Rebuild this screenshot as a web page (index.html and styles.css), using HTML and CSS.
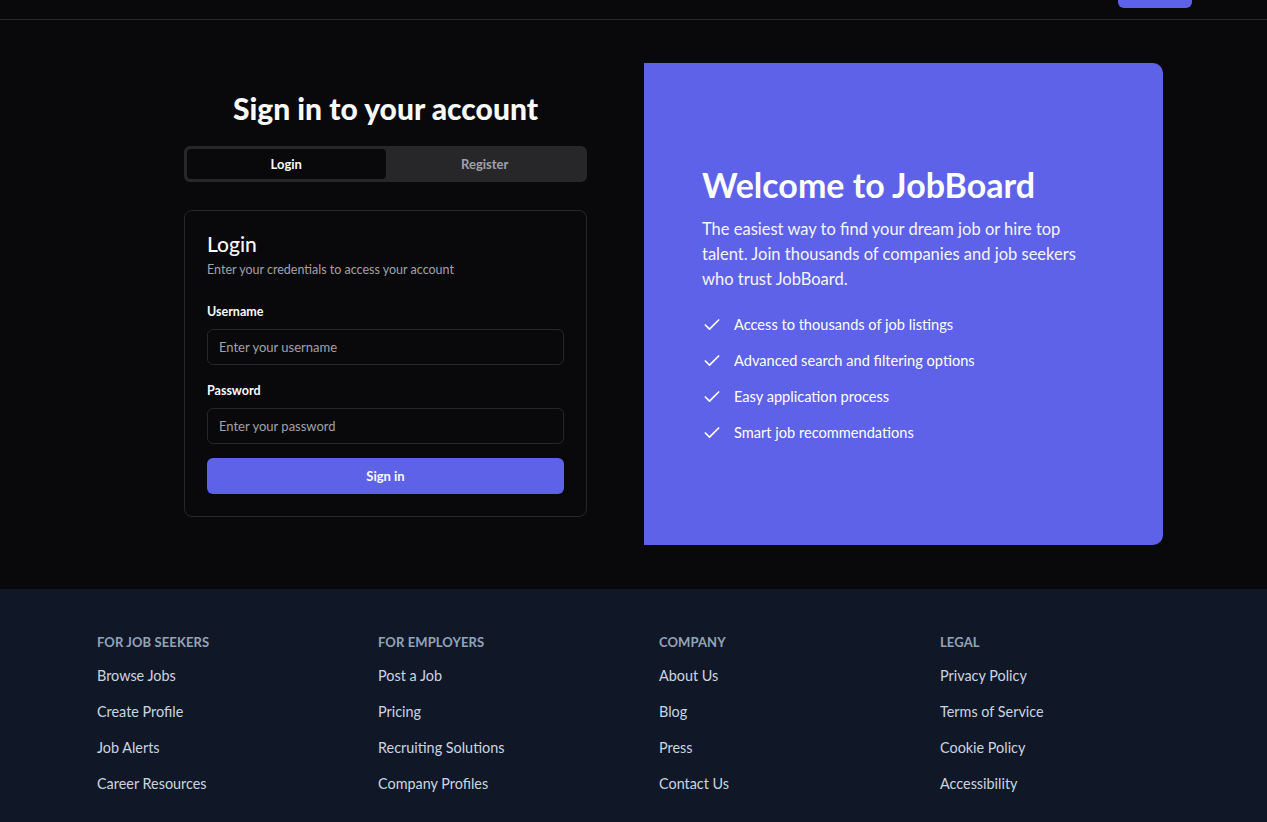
FILE: index.html
```html
<!DOCTYPE html>
<html lang="en">
<head>
<meta charset="utf-8">
<title>JobBoard - Sign in</title>
<link rel="stylesheet" href="styles.css">
</head>
<body>
<header class="topbar">
  <div class="topbar-btn"></div>
</header>
<main class="main">
  <section class="auth">
    <h1 class="auth-title">Sign in to your account</h1>
    <div class="tabs">
      <div class="tab tab-active">Login</div>
      <div class="tab">Register</div>
    </div>
    <div class="card">
      <h2 class="card-title">Login</h2>
      <p class="card-sub">Enter your credentials to access your account</p>
      <div class="field">
        <label class="label">Username</label>
        <div class="input">Enter your username</div>
      </div>
      <div class="field">
        <label class="label">Password</label>
        <div class="input">Enter your password</div>
      </div>
      <div class="btn">Sign in</div>
    </div>
  </section>
  <section class="promo">
    <div class="promo-inner">
      <h2 class="promo-title">Welcome to JobBoard</h2>
      <p class="promo-text">The easiest way to find your dream job or hire top talent. Join thousands of companies and job seekers who trust JobBoard.</p>
      <ul class="features">
        <li class="feature"><svg class="check" viewBox="0 0 24 24" fill="none" stroke="currentColor" stroke-width="2" stroke-linecap="round" stroke-linejoin="round"><path d="M20 6 9 17l-5-5"/></svg>Access to thousands of job listings</li>
        <li class="feature"><svg class="check" viewBox="0 0 24 24" fill="none" stroke="currentColor" stroke-width="2" stroke-linecap="round" stroke-linejoin="round"><path d="M20 6 9 17l-5-5"/></svg>Advanced search and filtering options</li>
        <li class="feature"><svg class="check" viewBox="0 0 24 24" fill="none" stroke="currentColor" stroke-width="2" stroke-linecap="round" stroke-linejoin="round"><path d="M20 6 9 17l-5-5"/></svg>Easy application process</li>
        <li class="feature"><svg class="check" viewBox="0 0 24 24" fill="none" stroke="currentColor" stroke-width="2" stroke-linecap="round" stroke-linejoin="round"><path d="M20 6 9 17l-5-5"/></svg>Smart job recommendations</li>
      </ul>
    </div>
  </section>
</main>
<footer class="footer">
  <div class="footer-grid">
    <div class="fcol">
      <h3 class="fhead">For Job Seekers</h3>
      <a class="flink">Browse Jobs</a>
      <a class="flink">Create Profile</a>
      <a class="flink">Job Alerts</a>
      <a class="flink">Career Resources</a>
    </div>
    <div class="fcol">
      <h3 class="fhead">For Employers</h3>
      <a class="flink">Post a Job</a>
      <a class="flink">Pricing</a>
      <a class="flink">Recruiting Solutions</a>
      <a class="flink">Company Profiles</a>
    </div>
    <div class="fcol">
      <h3 class="fhead">Company</h3>
      <a class="flink">About Us</a>
      <a class="flink">Blog</a>
      <a class="flink">Press</a>
      <a class="flink">Contact Us</a>
    </div>
    <div class="fcol">
      <h3 class="fhead">Legal</h3>
      <a class="flink">Privacy Policy</a>
      <a class="flink">Terms of Service</a>
      <a class="flink">Cookie Policy</a>
      <a class="flink">Accessibility</a>
    </div>
  </div>
</footer>
</body>
</html>
```
FILE: styles.css
```css
* { box-sizing: border-box; }
html, body { margin: 0; padding: 0; }
body {
  background: #09090b;
  color: #fafafa;
  font-family: Lato, "Noto Sans", sans-serif;
}
.topbar {
  height: 20px;
  border-bottom: 1px solid #27272a;
  display: flex;
  justify-content: flex-end;
  padding-right: 75px;
}
.topbar-btn {
  width: 74px;
  height: 8px;
  background: #5e62e8;
  border-radius: 0 0 6px 6px;
}
.main {
  display: flex;
  gap: 57px;
  padding: 43px 0 44px 184px;
}
.auth {
  width: 403px;
  padding-top: 27px;
}
.auth-title {
  margin: 0;
  text-align: center;
  font-size: 30px;
  font-weight: 900;
  line-height: 36px;
}
.tabs {
  margin-top: 20px;
  height: 36px;
  background: #27272a;
  border-radius: 6px;
  padding: 3px;
  display: flex;
}
.tab {
  flex: 1;
  display: flex;
  align-items: center;
  justify-content: center;
  font-size: 13px;
  font-weight: 700;
  color: #a1a1aa;
  border-radius: 4px;
}
.tab-active {
  background: #09090b;
  color: #fafafa;
}
.card {
  margin-top: 28px;
  border: 1px solid #27272a;
  border-radius: 8px;
  padding: 20px 22px 22px 22px;
}
.card-title {
  margin: 0;
  font-size: 21px;
  font-weight: 500;
  line-height: 26px;
}
.card-sub {
  margin: 4px 0 0;
  font-size: 12.5px;
  color: #a1a1aa;
  line-height: 18px;
}
.field { margin-top: 25px; }
.field + .field { margin-top: 18px; }
.label {
  display: block;
  font-size: 12.5px;
  font-weight: 700;
  line-height: 16px;
  color: #fafafa;
}
.input {
  margin-top: 9px;
  height: 36px;
  border: 1px solid #27272a;
  border-radius: 6px;
  padding: 0 11px;
  display: flex;
  align-items: center;
  font-size: 13px;
  color: #a1a1aa;
}
.btn {
  margin-top: 14px;
  height: 36px;
  background: #5e62e8;
  border-radius: 6px;
  display: flex;
  align-items: center;
  justify-content: center;
  font-size: 13px;
  font-weight: 700;
  color: #fafafa;
}
.promo {
  width: 519px;
  height: 482px;
  background: #5e62e8;
  border-radius: 0 10px 10px 0;
  display: flex;
  align-items: center;
  padding: 0 58px 1px;
}
.promo-title {
  margin: 0;
  font-size: 34px;
  font-weight: 700;
  line-height: 40px;
  color: #fff;
}
.promo-text {
  margin: 12px 0 0;
  max-width: 390px;
  font-size: 16.5px;
  line-height: 25px;
  color: #f5f5ff;
}
.features {
  list-style: none;
  margin: 23px 0 0;
  padding: 0;
  display: flex;
  flex-direction: column;
  gap: 16px;
}
.feature {
  display: flex;
  align-items: center;
  gap: 12px;
  font-size: 14.6px;
  line-height: 20px;
  color: #fff;
}
.check {
  width: 20px;
  height: 20px;
  flex: none;
}
.footer {
  background: #101828;
  padding: 45px 0 20px 97px;
}
.footer-grid {
  display: grid;
  grid-template-columns: repeat(4, 249px);
  column-gap: 32px;
}
.fcol {
  display: flex;
  flex-direction: column;
}
.fhead {
  margin: 0 0 16px;
  font-size: 13px;
  font-weight: 700;
  text-transform: uppercase;
  letter-spacing: 0.1px;
  color: #94a3b8;
  line-height: 16px;
}
.flink {
  font-size: 14.4px;
  line-height: 20px;
  color: #cbd5e1;
  margin-bottom: 16px;
}
```
